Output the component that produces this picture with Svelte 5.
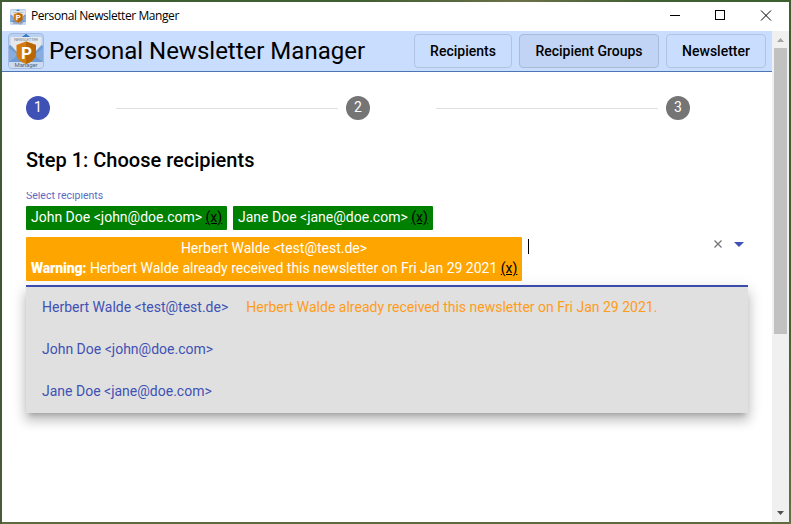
<script>
  const steps = [1, 2, 3];
  const nav = [
    { label: 'Recipients', width: 98 },
    { label: 'Recipient Groups', width: 140, active: true },
    { label: 'Newsletter', width: 100 }
  ];
  const chips = [
    { name: 'John Doe <john@doe.com>', width: 201 },
    { name: 'Jane Doe <jane@doe.com>', width: 200 }
  ];
  const options = [
    {
      name: 'Herbert Walde <test@test.de>',
      warning: 'Herbert Walde already received this newsletter on Fri Jan 29 2021.'
    },
    { name: 'John Doe <john@doe.com>' },
    { name: 'Jane Doe <jane@doe.com>' }
  ];
</script>

{#snippet logo(size)}
  <svg class="logo" width={size} height={size} viewBox="0 0 36 36">
    <rect x=".5" y=".5" width="35" height="35" rx="3.5" fill="#b9d2f2" stroke="#a3bade" />
    <path d="M1 13 18 1.500 35 13V29H1Z" fill="#709cd5" />
    <path d="M13 5 18 1 23 5Z" fill="#397bc8" />
    <path d="M2.500 4H33.500V12L27 19H9L2.500 12Z" fill="#e5e8ec" />
    <path d="M14 4 18 1 22 4Z" fill="#397bc8" />
    <path d="M1 15 10 22 1 29ZM35 15 26 22 35 29Z" fill="#87acdf" />
    <path d="M1 29H35V32Q35 35 32 35H4Q1 35 1 32Z" fill="#cbdcf3" />
    <path d="M18 8.500 28 12V23Q26 28 18 31Q10 28 8.500 23V12Z" fill="#d57c10" />
    <path d="M18 8.500 28 12V23Q26 28 18 31Z" fill="#b96706" />
    <text x="18" y="8.300" text-anchor="middle" font-size="4.300" textLength="24" fill="#7d8794">NEWSLETTER</text>
    <text x="18.500" y="25.500" text-anchor="middle" font-size="17" font-weight="700" fill="#fff">P</text>
    <text x="18" y="34" text-anchor="middle" font-size="6" font-weight="400" textLength="23" fill="#59677b">Manager</text>
  </svg>
{/snippet}

<div class="window">
  <div class="titlebar">
    {@render logo(16)}
    <span class="title">Personal Newsletter Manger</span>
    <svg class="controls" width="138" height="29" viewBox="0 0 138 29" fill="none" stroke="#000" shape-rendering="crispEdges">
      <path d="M19 13.500H29M64.500 8.500H73.500V17.500H64.500Z" />
      <path d="M110 8.500 120 18.500M120 8.500 110 18.500" shape-rendering="auto" />
    </svg>
  </div>
  <div class="body">
    <div class="page">
      <header>
        {@render logo(36)}
        <h1>Personal Newsletter Manager</h1>
        <nav>
          {#each nav as item}
            <button class:active={item.active} style:width="{item.width}px">{item.label}</button>
          {/each}
        </nav>
      </header>
      <main>
        <div class="stepper">
          {#each steps as n}
            {#if n > 1}<div class="line"></div>{/if}
            <div class="step"><span class="badge" class:current={n === 1}>{n}</span></div>
          {/each}
        </div>
        <h2>Step 1: Choose recipients</h2>
        <div class="label"><span>Select recipients</span></div>
        <div class="field">
          <div class="values">
            <div class="row">
              {#each chips as chip}
                <div class="chip" style:width="{chip.width}px"><span>{chip.name} <u>(x)</u></span></div>
              {/each}
            </div>
            <div class="row">
              <div class="chip warn">
                <span class="who">Herbert Walde &lt;test@test.de&gt;</span>
                <span class="msg"><b>Warning:</b> Herbert Walde already received this newsletter on Fri Jan 29 2021 <u>(x)</u></span>
              </div>
              <i class="caret"></i>
            </div>
          </div>
          <svg class="tools" width="36" height="12" viewBox="0 0 36 12">
            <path d="M2.500 2.500 9.500 9.500M9.500 2.500 2.500 9.500" stroke="#757575" stroke-width="1.300" />
            <path d="M22 4H32L27 9Z" fill="#3f51b5" />
          </svg>
        </div>
        <div class="panel">
          {#each options as o}
            <div class="option"><span class="name">{o.name}</span>{#if o.warning}<span class="note">{o.warning}</span>{/if}</div>
          {/each}
        </div>
      </main>
    </div>
    <div class="scroll">
      <svg width="17" height="17"><path d="M5 11H12L8.500 7Z" fill="#a3a3a3" /></svg>
      <div class="thumb"></div>
      <svg class="down" width="17" height="17"><path d="M5 6H12L8.500 10Z" fill="#505050" /></svg>
    </div>
  </div>
</div>

<style>
  .window {
    width: 791px;
    height: 524px;
    box-sizing: border-box;
    padding: 2px;
    background:
      linear-gradient(90deg, #3f5c33, #405f31 45%, #6b7048 66%, #405f32 82%, #3c6030) top / 100% 2px no-repeat,
      linear-gradient(#3c6030, #47602f 60%, #666d43) right / 2px 100% no-repeat,
      linear-gradient(#46613a, #3f5534 50%, #4a5b38) left / 2px 100% no-repeat,
      #5f6a3f;
    display: flex;
    flex-direction: column;
    font-family: Roboto, 'Liberation Sans', sans-serif;
    color: #000;
    overflow: hidden;
  }
  .titlebar {
    height: 29px;
    background: #fff;
    display: flex;
    align-items: center;
    padding-left: 8px;
  }
  .logo { display: block; flex: none; }
  .title {
    margin-left: 5px;
    margin-top: -1px;
    font: 12px/16px 'Open Sans', 'Noto Sans', sans-serif;
    letter-spacing: -0.42px;
    white-space: nowrap;
  }
  .controls { margin-left: auto; }
  .body { display: flex; height: 491px; background: #fff; }
  .page { width: 770px; }
  header {
    height: 41px;
    box-sizing: border-box;
    background: #c9ddff;
    border-bottom: 1px solid #4e76b7;
    display: flex;
    align-items: center;
    padding: 0 6px;
  }
  h1 {
    margin: 0 0 0 5px;
    font-size: 24px;
    line-height: 32px;
    font-weight: 400;
    white-space: nowrap;
  }
  nav { margin-left: auto; display: flex; gap: 7px; }
  button {
    height: 34px;
    box-sizing: border-box;
    padding: 0;
    border: 1px solid #b1c3e1;
    border-radius: 4px;
    background: none;
    font: 500 14px/32px Roboto, sans-serif;
    color: #000;
    white-space: nowrap;
  }
  .active { background: #c1d4f5; border-color: #a9bbd7; }
  main { padding: 24px 24px 0; }
  .stepper { display: flex; align-items: center; }
  .step { width: 82px; }
  .badge {
    display: block;
    width: 24px;
    height: 24px;
    border-radius: 50%;
    background: #757575;
    color: #fff;
    font-size: 14px;
    line-height: 23px;
    text-align: center;
  }
  .current { background: #3f51b5; }
  .line { flex: 1; height: 1px; margin: 1px 8px 0; background: #e0e0e0; }
  h2 {
    margin: 24px 0 16px;
    font-size: 20px;
    line-height: 32px;
    font-weight: 500;
    white-space: nowrap;
  }
  .label {
    height: 10px;
    overflow: hidden;
    color: #3f51b5;
    font-size: 10.5px;
    white-space: nowrap;
    display: flex;
    align-items: flex-end;
    opacity: .85;
  }
  .label span { line-height: 13px; }
  .field {
    margin-top: 4px;
    height: 81px;
    box-sizing: border-box;
    border-bottom: 2px solid #3f51b5;
    display: flex;
    justify-content: space-between;
  }
  .values { display: flex; flex-direction: column; gap: 7px; }
  .row { display: flex; gap: 6px; }
  .chip {
    height: 24px;
    box-sizing: border-box;
    padding: 0 5px;
    border-radius: 1px;
    background: #008000;
    color: #fff;
    font-size: 14px;
    line-height: 22px;
    white-space: nowrap;
  }
  u { color: #000; }
  .warn {
    width: 496px;
    height: 44px;
    padding-top: 1px;
    background: #ffa500;
    display: flex;
    flex-direction: column;
    line-height: 20px;
  }
  .who { text-align: center; }
  .warn b { font-weight: 900; letter-spacing: -0.15px; }
  .caret { width: 1px; height: 15px; margin-top: 2px; background: #000; }
  .tools { margin: 32px 0 0; }
  .panel {
    background: #e0e0e0;
    box-shadow: 0 5px 5px -3px rgba(0, 0, 0, .2), 0 8px 10px 1px rgba(0, 0, 0, .14), 0 3px 14px 2px rgba(0, 0, 0, .12);
    clip-path: inset(-12px -24px -30px);
  }
  .option {
    height: 42px;
    padding: 0 16px;
    font-size: 14px;
    line-height: 41px;
    color: #3f51b5;
    white-space: nowrap;
  }
  .note { margin-left: 18px; color: #ff9c1a; }
  .scroll { width: 17px; background: #f0f0f0; display: flex; flex-direction: column; }
  .scroll svg { display: block; }
  .thumb { width: 13px; height: 286px; margin-left: 2px; background: #c1c1c1; }
  .down { margin-top: auto; }
</style>
